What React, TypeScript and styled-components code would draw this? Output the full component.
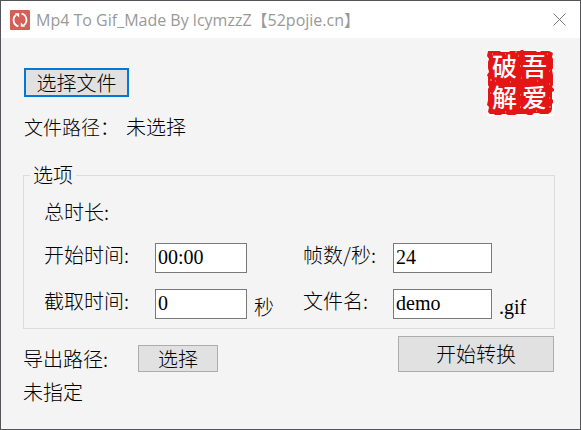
import React, { useState } from "react";
import styled, { createGlobalStyle } from "styled-components";

const GlobalStyle = createGlobalStyle`
  *, *::before, *::after { box-sizing: border-box; }
  body {
    margin: 0;
    color: #000;
    font-family: "Noto Sans CJK SC", sans-serif;
    font-size: 20px;
    font-weight: 300;
    line-height: 24px;
  }
`;

const Window = styled.div`
  display: flex;
  flex-direction: column;
  min-height: 100vh;
  border: 1px solid #55535a;
  background: #f4f4f4;
`;

const TitleBar = styled.header`
  display: flex;
  align-items: center;
  height: 37px;
  padding: 0 14px 0 9px;
  gap: 6px;
  background: #fff;
`;

const Title = styled.h1`
  flex: 1;
  margin: 0;
  color: #999;
  font: 400 16px/20px "Open Sans", "Noto Sans CJK SC", sans-serif;
  white-space: nowrap;
`;

const CloseButton = styled.button`
  display: flex;
  padding: 0;
  border: 0;
  background: none;
`;

const Content = styled.main`
  flex: 1;
  padding: 12px 25px 0 22px;
`;

const TopRow = styled.div`
  display: flex;
  justify-content: space-between;
  align-items: flex-start;
`;

const FilePicker = styled.section`
  padding: 18px 0 0 1px;
`;

const Button = styled.button<{ $primary?: boolean; $width: number; $height: number }>`
  width: ${(p) => p.$width}px;
  height: ${(p) => p.$height}px;
  padding: 0;
  border: ${(p) => (p.$primary ? "2px solid #0078d7" : "1px solid #adadad")};
  background: #e1e1e1;
  color: #000;
  font: inherit;
  line-height: 20px;
`;

const FilePath = styled.p`
  display: flex;
  gap: 7px;
  margin: 18px 0 0;
`;

const PathLabel = styled.span`
  font-size: 19px;
`;

const Options = styled.fieldset`
  margin: 24px 0 0;
  padding: 13px 0 9px 20px;
  border: 1px solid #dcdcdc;
`;

const Legend = styled.legend`
  margin-left: -14px;
  padding: 0 3px;
`;

const OptionGrid = styled.div`
  display: grid;
  grid-template-columns: 111px minmax(148px, 1fr) 90px minmax(161px, 1fr);
  row-gap: 16px;
  margin-top: 19px;
`;

const Field = styled.div`
  display: flex;
  align-items: flex-end;
  gap: 7px;
`;

const TextBox = styled.input<{ $width: number }>`
  width: ${(p) => p.$width}px;
  height: 30px;
  padding: 0 2px 2px;
  border: 1px solid #7a7a7a;
  border-radius: 0;
  background: #fff;
  color: #000;
  font: 400 20px/24px "Liberation Serif", serif;
`;

const Unit = styled.span``;

const Extension = styled.span`
  font-family: "Liberation Serif", serif;
`;

const BottomRow = styled.div`
  display: flex;
  justify-content: space-between;
  align-items: flex-start;
  padding: 7px 1px 0 0;
`;

const ExportRow = styled.div`
  display: flex;
  align-items: center;
  gap: 30px;
  padding-top: 9px;
`;

const ExportPath = styled.p`
  margin: 8px 0 0;
`;

const AppIcon = () => (
  <svg width="20" height="20" viewBox="0 0 20 20" aria-hidden="true">
    <rect width="20" height="20" rx="1" fill="#d65f55" />
    <g fill="none" stroke="#fff" strokeWidth="1.8">
      <path d="M8.4 16.3A6.5 6.5 0 0 1 6.2 4.8" />
      <path d="M11.6 3.7A6.5 6.5 0 0 1 13.8 15.2" />
    </g>
    <path d="M4.8 3.2H9.2V7.4ZM15.2 16.8H10.8V12.6Z" fill="#fff" />
  </svg>
);

const CloseIcon = () => (
  <svg width="13" height="13" viewBox="0 0 13 13" aria-hidden="true">
    <path d="M.5.5 12.5 12.5M12.5.5.5 12.5" stroke="#777" fill="none" />
  </svg>
);

const SealFrame = styled.svg`
  overflow: visible;
`;

const SealText = styled.text`
  fill: #fff;
  font-family: "Noto Sans CJK SC", sans-serif;
  font-size: 25px;
  font-weight: 500;
`;

const Seal = () => (
  <SealFrame width="68" height="66" viewBox="0 0 68 66" role="img" aria-label="吾爱破解">
    <path d="M0 0H67V66H0Z" fill="#fff" />
    <path
      d="M1 1H13L14 2H22L23 1H33L34 0H36L37 1H49L50 2H53L54 1H62L64 2L66 3L65 7L66 9V18L65 20L66 25V35L65 37L67 39V41L65 42V49L66 50V53L65 54V59L64 62L61 64H53L52 63H47L45 65H41L39 64H30L28 65H21L19 64H15L14 65H8L7 64H3L1 62L2 57L0 55L1 50V39L2 37L1 35V27L0 25L2 22L1 18V12L2 9L0 6Z"
      fill="#e31515"
    />
    <SealText x="5" y="26">破</SealText>
    <SealText x="35" y="26">吾</SealText>
    <SealText x="5" y="57">解</SealText>
    <SealText x="35" y="57">爱</SealText>
    <path
      d="M5 4h1M18 4h1M31 6h1M60 4h1M33 16h1M62 21h1M34 28h1M8 31h1M23 32h1M50 31h1M62 34h1M3 43h1M33 45h1M62 48h1M33 57h1M18 62h1M49 61h1M3 30h2M62 57h2M28 2h2"
      stroke="#f9a9a9"
    />
  </SealFrame>
);

export default function App() {
  const [start, setStart] = useState("00:00");
  const [duration, setDuration] = useState("0");
  const [fps, setFps] = useState("24");
  const [name, setName] = useState("demo");

  return (
    <Window>
      <GlobalStyle />
      <TitleBar>
        <AppIcon />
        <Title>Mp4 To Gif_Made By lcymzzZ【52pojie.cn】</Title>
        <CloseButton type="button" aria-label="关闭">
          <CloseIcon />
        </CloseButton>
      </TitleBar>
      <Content>
        <TopRow>
          <FilePicker>
            <Button type="button" $primary $width={105} $height={29}>选择文件</Button>
            <FilePath>
              <PathLabel>文件路径：</PathLabel>
              <span>未选择</span>
            </FilePath>
          </FilePicker>
          <Seal />
        </TopRow>
        <Options>
          <Legend>选项</Legend>
          <div>总时长:</div>
          <OptionGrid>
            <label htmlFor="start">开始时间:</label>
            <Field>
              <TextBox id="start" $width={92} value={start} onChange={(e) => setStart(e.target.value)} />
            </Field>
            <label htmlFor="fps">帧数/秒:</label>
            <Field>
              <TextBox id="fps" $width={99} value={fps} onChange={(e) => setFps(e.target.value)} />
            </Field>
            <label htmlFor="duration">截取时间:</label>
            <Field>
              <TextBox id="duration" $width={92} value={duration} onChange={(e) => setDuration(e.target.value)} />
              <Unit>秒</Unit>
            </Field>
            <label htmlFor="name">文件名:</label>
            <Field>
              <TextBox id="name" $width={99} value={name} onChange={(e) => setName(e.target.value)} />
              <Extension>.gif</Extension>
            </Field>
          </OptionGrid>
        </Options>
        <BottomRow>
          <div>
            <ExportRow>
              <span>导出路径:</span>
              <Button type="button" $width={80} $height={27}>选择</Button>
            </ExportRow>
            <ExportPath>未指定</ExportPath>
          </div>
          <Button type="button" $width={156} $height={36}>开始转换</Button>
        </BottomRow>
      </Content>
    </Window>
  );
}
